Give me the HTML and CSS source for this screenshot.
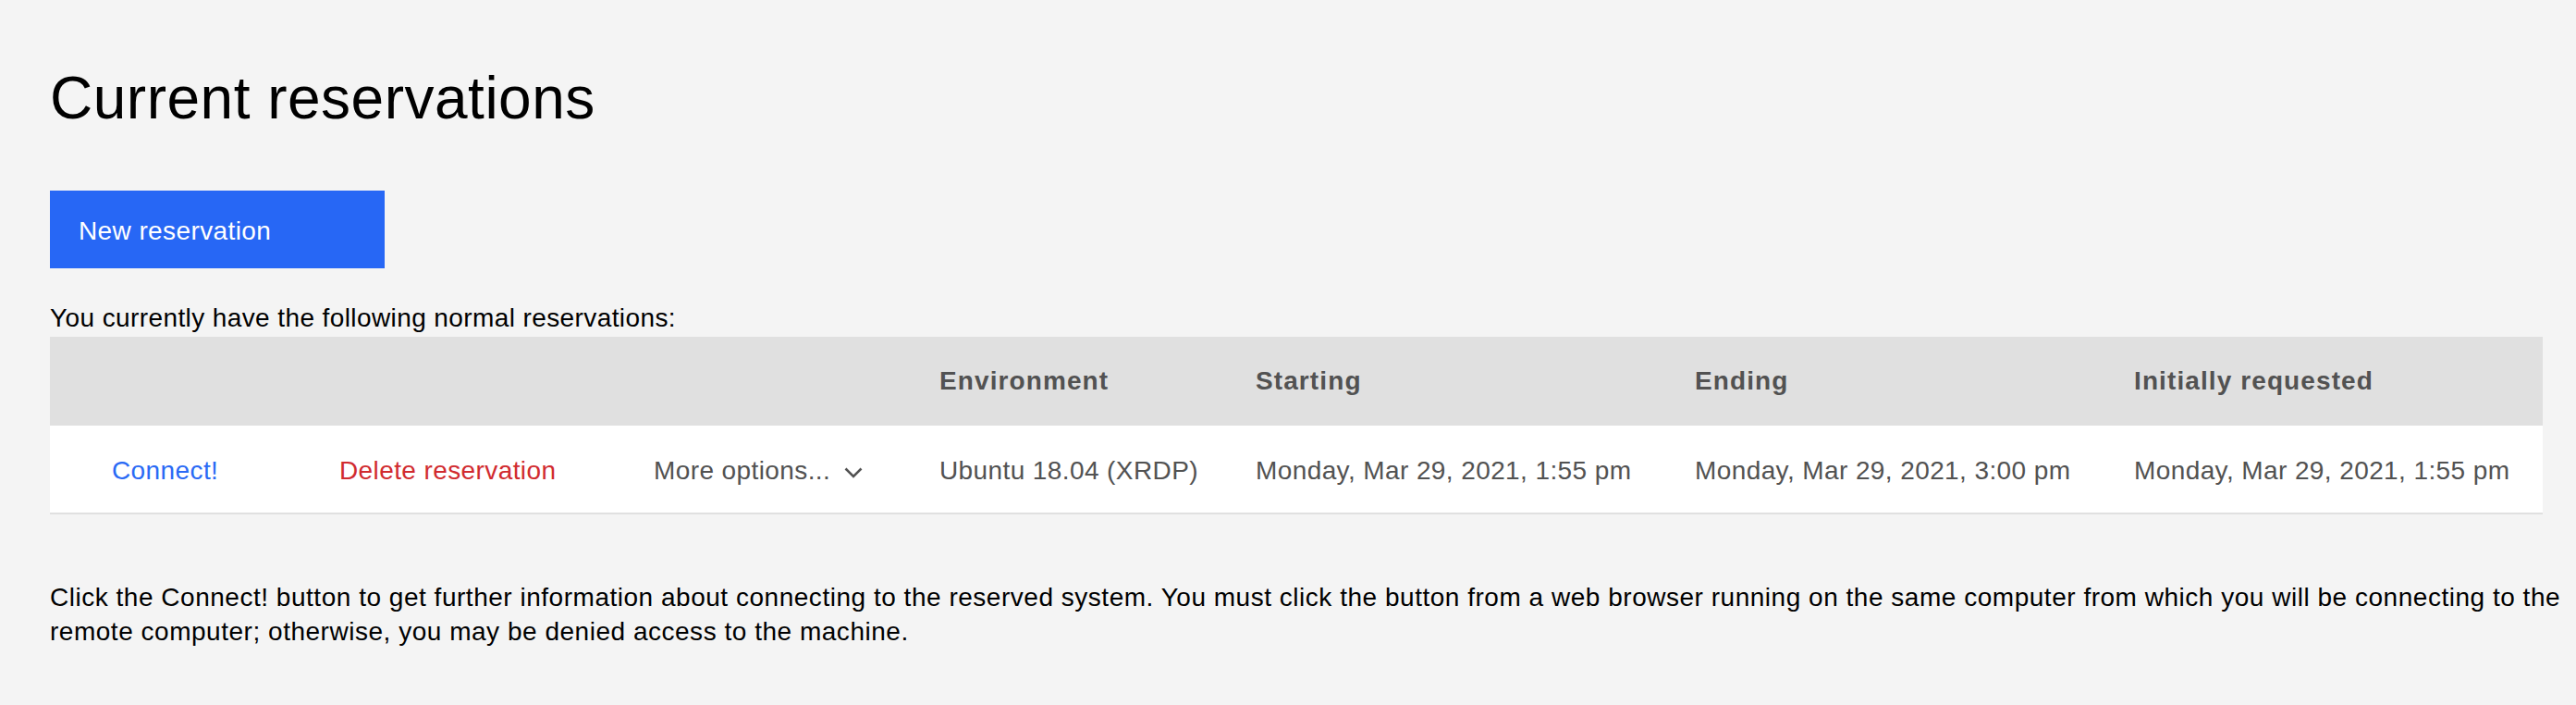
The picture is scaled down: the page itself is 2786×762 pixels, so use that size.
FILE: index.html
```html
<!DOCTYPE html>
<html lang="en">
<head>
<meta charset="utf-8">
<title>Current reservations</title>
<link rel="stylesheet" href="styles.css">
</head>
<body>
<main class="page">
  <h1 class="title">Current reservations</h1>
  <button class="btn-primary" type="button">New reservation</button>
  <p class="intro">You currently have the following normal reservations:</p>
  <div class="table" role="table">
    <div class="row row-head" role="row">
      <div class="cell" role="columnheader"></div>
      <div class="cell" role="columnheader"></div>
      <div class="cell" role="columnheader"></div>
      <div class="cell" role="columnheader">Environment</div>
      <div class="cell" role="columnheader">Starting</div>
      <div class="cell" role="columnheader">Ending</div>
      <div class="cell" role="columnheader">Initially requested</div>
    </div>
    <div class="row row-body" role="row">
      <div class="cell cell-first" role="cell"><a class="link-connect" href="#">Connect!</a></div>
      <div class="cell" role="cell"><a class="link-delete" href="#">Delete reservation</a></div>
      <div class="cell" role="cell">
        <span class="more">More options...
          <svg class="chevron" width="20" height="12" viewBox="0 0 20 12" aria-hidden="true"><polyline points="1.5,1.5 10,10 18.5,1.5" fill="none" stroke="currentColor" stroke-width="2.6"/></svg>
        </span>
      </div>
      <div class="cell" role="cell">Ubuntu 18.04 (XRDP)</div>
      <div class="cell" role="cell">Monday, Mar 29, 2021, 1:55 pm</div>
      <div class="cell" role="cell">Monday, Mar 29, 2021, 3:00 pm</div>
      <div class="cell" role="cell">Monday, Mar 29, 2021, 1:55 pm</div>
    </div>
  </div>
  <p class="note">Click the Connect! button to get further information about connecting to the reserved system. You must click the button from a web browser running on the same computer from which you will be connecting to the remote computer; otherwise, you may be denied access to the machine.</p>
</main>
</body>
</html>
```
FILE: styles.css
```css
html, body {
  margin: 0;
  padding: 0;
  background: #f4f4f4;
}

body {
  font-family: "Liberation Sans", Arial, sans-serif;
  font-size: 28px;
  letter-spacing: 0.4px;
  color: #161616;
}

.page {
  padding: 66px 6px 40px 54px;
  display: flex;
  flex-direction: column;
  align-items: flex-start;
}

.title {
  margin: 0;
  font-size: 64px;
  font-weight: 400;
  line-height: 80px;
  letter-spacing: 0.5px;
  color: #000;
}

.btn-primary {
  margin-top: 60px;
  width: 362px;
  height: 84px;
  padding: 4px 0 0 31px;
  border: 0;
  border-radius: 0;
  background: #2767f5;
  color: #fff;
  font-family: inherit;
  font-size: 28px;
  letter-spacing: 0.4px;
  text-align: left;
  display: flex;
  align-items: center;
}

.intro {
  margin: 36px 0 0;
  line-height: 36px;
  color: #000;
}

.table {
  margin-top: 2px;
  width: 2696px;
  display: flex;
  flex-direction: column;
}

.row {
  display: grid;
  grid-template-columns: 281px 340px 309px 342px 475px 475px 1fr;
  align-items: center;
  box-sizing: border-box;
  height: 96px;
}

.row-head {
  background: #e0e0e0;
  color: #525252;
  font-weight: 700;
  letter-spacing: 1.1px;
}

.row-body {
  background: #fff;
  border-bottom: 2px solid #e0e0e0;
  color: #525252;
  padding-top: 4px;
}

.cell {
  padding: 0 32px;
  white-space: nowrap;
}

.cell-first {
  padding-left: 67px;
}

.link-connect {
  color: #2a6af5;
  text-decoration: none;
}

.link-delete {
  color: #d12b2f;
  text-decoration: none;
}

.more {
  display: inline-flex;
  align-items: center;
  gap: 15px;
  color: #525252;
}

.chevron {
  margin-top: 4px;
}

.note {
  margin: 71px 0 0;
  line-height: 37px;
  letter-spacing: 0.52px;
  color: #000;
}
```
